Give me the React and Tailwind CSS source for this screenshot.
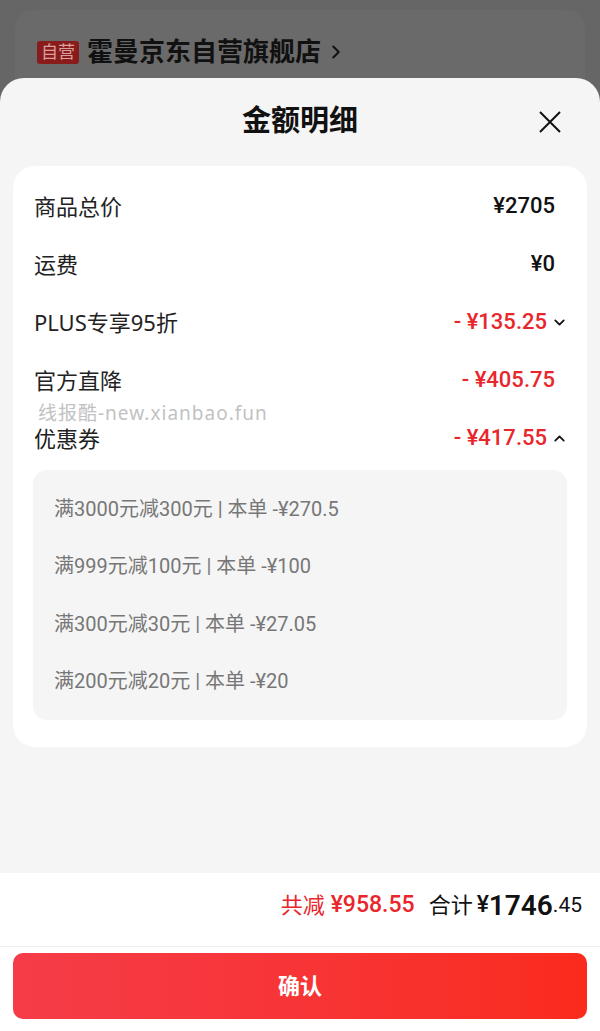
import { ChevronDown, ChevronUp, ChevronRight } from "lucide-react";

const font = { fontFamily: '"Roboto", "Noto Sans CJK SC", sans-serif' };
const noto = { fontFamily: '"Noto Sans", "Noto Sans CJK SC", sans-serif' };

const rows = [
  { label: "商品总价", value: "¥2705" },
  { label: "运费", value: "¥0" },
  { label: "PLUS专享95折", value: "- ¥135.25", red: true, chev: "down" },
  { label: "官方直降", value: "- ¥405.75", red: true },
  { label: "优惠券", value: "- ¥417.55", red: true, chev: "up" },
];

const coupons = [
  "满3000元减300元 | 本单 -¥270.5",
  "满999元减100元 | 本单 -¥100",
  "满300元减30元 | 本单 -¥27.05",
  "满200元减20元 | 本单 -¥20",
];

export default function App() {
  return (
    <div className="w-[600px] h-[1031px] bg-[#666666] flex flex-col overflow-hidden" style={font}>
      {/* dimmed page behind */}
      <div className="h-[78px] px-[15px] pt-[10px] shrink-0">
        <div className="h-full rounded-t-[18px] bg-[#6a6a6a] flex items-center pl-[22px] pt-[16px]">
          <span className="bg-[#8a1b1b] text-[#d9a0a0] text-[17px] leading-[23px] px-[4px] rounded-[3px]">自营</span>
          <span className="ml-[8px] text-[#111] text-[26px] font-bold">霍曼京东自营旗舰店</span>
          <ChevronRight size={22} strokeWidth={2.2} className="text-[#111] ml-[4px]" />
        </div>
      </div>

      {/* sheet */}
      <div className="flex-1 bg-[#f5f5f5] rounded-t-[24px] flex flex-col">
        <div className="relative h-[88px] flex items-center justify-center">
          <span className="text-[29px] font-bold text-[#111]">金额明细</span>
          <svg className="absolute left-[538px] top-[32px]" width="24" height="24" viewBox="0 0 24 24" fill="none" stroke="#111" strokeWidth="2">
            <path d="M2 2 L22 22 M22 2 L2 22" />
          </svg>
        </div>

        <div className="mx-[13px] bg-white rounded-[22px] pt-[11px] pb-[27px] relative">
          {rows.map((r) => (
            <div key={r.label} className="h-[58px] flex items-center pl-[21px] pr-[19px]">
              <span className="text-[22px] leading-[24px] text-[#222]" style={noto}>{r.label}</span>
              <div className="ml-auto flex items-center">
                <span className={`text-[22px] leading-[24px] font-medium ${r.red ? "text-[#e8262b]" : "text-[#111]"}`}>{r.value}</span>
                {r.chev === "down" && <ChevronDown size={17} strokeWidth={2.5} className="text-[#111] ml-[4px]" />}
                {r.chev === "up" && <ChevronUp size={17} strokeWidth={2.5} className="text-[#111] ml-[4px]" />}
                {!r.chev && <span className="w-[13px]" />}
              </div>
            </div>
          ))}
          <span className="absolute left-[25px] top-[237px] text-[19px] leading-[20px] tracking-[1px] text-[#c2c2c2]" style={noto}>线报酷-new.xianbao.fun</span>

          <div className="mx-[20px] mt-[3px] bg-[#f5f5f5] rounded-[14px] py-[10px] pl-[21px]">
            {coupons.map((c) => (
              <div key={c} className="h-[57.5px] flex items-center text-[20px] text-[#777]">{c}</div>
            ))}
          </div>
        </div>

        <div className="flex-1" />

        <div className="bg-white h-[74px] flex items-center justify-end pr-[18px] pb-[8px] border-b border-[#eeeeee]">
          <span className="text-[22px] text-[#e8262b]">共减</span>
          <span className="text-[23px] font-medium text-[#e8262b] ml-[6px]">¥958.55</span>
          <span className="text-[22px] text-[#111] ml-[14px]">合计</span>
          <span className="text-[23px] font-medium text-[#111] ml-[4px]">¥</span>
          <span className="text-[28px] font-semibold text-[#111]">1746</span>
          <span className="text-[21px] text-[#111]">.45</span>
        </div>
        <div className="bg-white h-[84px] px-[13px] pt-[6px]">
          <button className="w-full h-[66px] rounded-[10px] bg-gradient-to-r from-[#f53c48] to-[#fa2b1c] text-white text-[22px] font-bold">确认</button>
        </div>
      </div>
    </div>
  );
}
